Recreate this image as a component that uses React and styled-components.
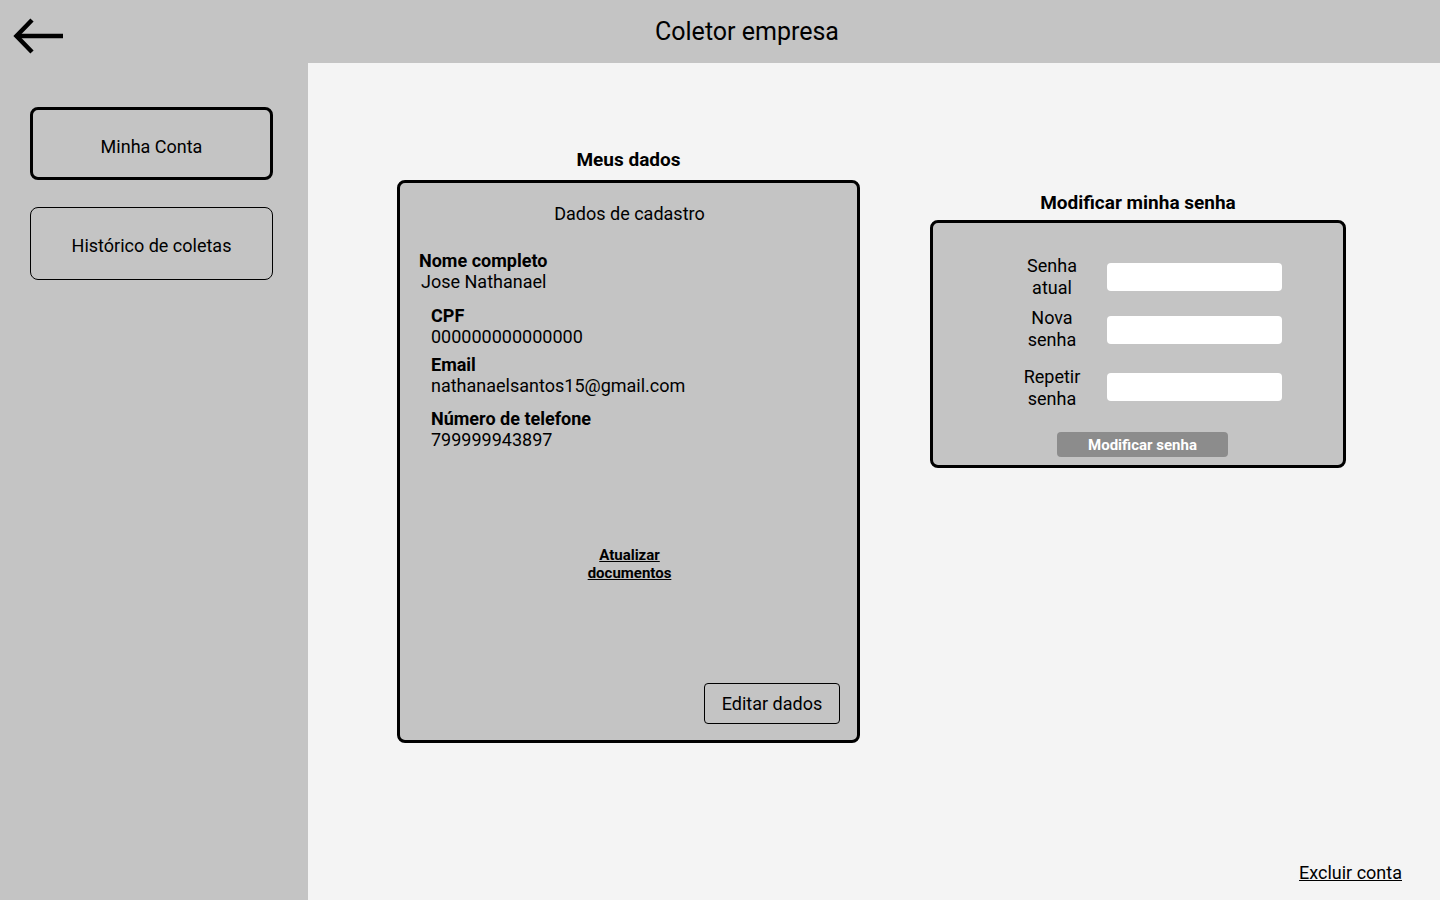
import React from 'react';
import styled, { createGlobalStyle } from 'styled-components';

const GlobalStyle = createGlobalStyle`
  * { box-sizing: border-box; }
  body {
    margin: 0;
    font-family: Roboto, "Liberation Sans", sans-serif;
    color: #000;
  }
`;

const Page = styled.div`
  min-height: 100vh;
  display: grid;
  grid-template-columns: 308px 1fr;
  grid-template-rows: 63px 1fr;
  background-color: #c4c4c4;
`;

const Header = styled.header`
  grid-column: 1 / 3;
  display: flex;
  align-items: center;
  background-color: #c4c4c4;
`;

const BackButton = styled.button`
  flex: none;
  width: 66px;
  height: 63px;
  padding: 16px 0 0 12px;
  border: none;
  background: none;
  display: flex;
  align-items: flex-start;
  cursor: pointer;

  svg {
    flex: none;
  }
`;

const Title = styled.h1`
  flex: 1;
  margin: 0;
  text-align: center;
  font-size: 25px;
  font-weight: 400;
  line-height: 29px;
  padding: 0 12px 1px 0;
`;

const Sidebar = styled.nav`
  display: flex;
  flex-direction: column;
  gap: 27px;
  padding: 44px 35px 0 30px;
`;

const NavButton = styled.button`
  height: 73px;
  width: 243px;
  background: transparent;
  border: ${(p) => (p.$active ? '3px' : '1px')} solid #000;
  border-radius: 8px;
  font-family: Roboto, "Liberation Sans", sans-serif;
  font-size: 18px;
  color: #000;
  padding-top: ${(p) => (p.$active ? '7px' : '5px')};
  cursor: pointer;
`;

const Main = styled.main`
  background-color: #f4f4f4;
  display: flex;
  flex-direction: column;
  padding: 86px 38px 17px 89px;
`;

const Columns = styled.div`
  display: flex;
  align-items: flex-start;
  gap: 70px;
`;

const Column = styled.section`
  display: flex;
  flex-direction: column;
  align-items: center;
  width: ${(p) => p.$width}px;
  margin-top: ${(p) => p.$offset || 0}px;
`;

const SectionTitle = styled.h2`
  margin: 0 0 ${(p) => p.$gap || 10}px;
  font-size: 19px;
  font-weight: 700;
  line-height: 21px;
`;

const Card = styled.div`
  width: 100%;
  background-color: #c4c4c4;
  border: 3px solid #000;
  border-radius: 8px;
`;

const DataCard = styled(Card)`
  height: 563px;
  display: flex;
  flex-direction: column;
  padding: 20px 17px 16px 19px;
`;

const CardHeading = styled.div`
  text-align: center;
  font-size: 18px;
  line-height: 21px;
  margin-bottom: 26px;
`;

const Field = styled.div`
  display: flex;
  flex-direction: column;
  margin-left: ${(p) => p.$indent || 0}px;
  margin-bottom: ${(p) => p.$gap || 0}px;
  font-size: 18px;
  line-height: 21px;
`;

const FieldLabel = styled.span`
  font-weight: 700;
`;

const FieldValue = styled.span`
  padding-left: ${(p) => p.$shift || 0}px;
`;

const DocLink = styled.a`
  align-self: center;
  margin-top: 96px;
  text-align: center;
  font-size: 15px;
  font-weight: 700;
  line-height: 18px;
  color: #000;
  text-decoration: underline;
`;

const EditButton = styled.button`
  align-self: flex-end;
  margin-top: auto;
  width: 136px;
  height: 41px;
  background: transparent;
  border: 1px solid #000;
  border-radius: 4px;
  font-family: Roboto, "Liberation Sans", sans-serif;
  font-size: 18px;
  color: #000;
  cursor: pointer;
`;

const PasswordCard = styled(Card)`
  padding: 32px 0 8px 69px;
`;

const PasswordRow = styled.label`
  display: grid;
  grid-template-columns: 100px 175px;
  column-gap: 5px;
  align-items: center;
  margin-bottom: ${(p) => p.$gap}px;
`;

const PasswordLabel = styled.span`
  text-align: center;
  font-size: 18px;
  line-height: 22px;
`;

const PasswordInput = styled.input`
  height: 28px;
  width: 175px;
  border: none;
  border-radius: 4px;
  background: #fff;
  margin-top: ${(p) => p.$shift || 0}px;
`;

const SubmitButton = styled.button`
  display: block;
  width: 171px;
  height: 25px;
  margin: 0 0 0 55px;
  padding: 0;
  border: none;
  border-radius: 4px;
  background-color: #8c8c8c;
  color: #fff;
  font-family: Roboto, "Liberation Sans", sans-serif;
  font-size: 15px;
  font-weight: 700;
  cursor: pointer;
`;

const DeleteLink = styled.a`
  margin-top: auto;
  align-self: flex-end;
  font-size: 18px;
  line-height: 21px;
  color: #000;
  text-decoration: underline;
`;

const BackArrow = () => (
  <svg width="54" height="40" viewBox="0 0 54 40" fill="none">
    <path d="M6 20H51" stroke="#000" strokeWidth="4.5" />
    <path d="M20 4L4.5 20L20 36" stroke="#000" strokeWidth="4.5" strokeLinejoin="miter" />
  </svg>
);

export default function App() {
  return (
    <Page>
      <GlobalStyle />
      <Header>
        <BackButton aria-label="Voltar">
          <BackArrow />
        </BackButton>
        <Title>Coletor empresa</Title>
      </Header>

      <Sidebar>
        <NavButton $active>Minha Conta</NavButton>
        <NavButton>Histórico de coletas</NavButton>
      </Sidebar>

      <Main>
        <Columns>
          <Column $width={463}>
            <SectionTitle>Meus dados</SectionTitle>
            <DataCard>
              <CardHeading>Dados de cadastro</CardHeading>
              <Field $gap={13}>
                <FieldLabel>Nome completo</FieldLabel>
                <FieldValue $shift={2}>Jose Nathanael</FieldValue>
              </Field>
              <Field $indent={12} $gap={7}>
                <FieldLabel>CPF</FieldLabel>
                <FieldValue>000000000000000</FieldValue>
              </Field>
              <Field $indent={12} $gap={12}>
                <FieldLabel>Email</FieldLabel>
                <FieldValue>nathanaelsantos15@gmail.com</FieldValue>
              </Field>
              <Field $indent={12}>
                <FieldLabel>Número de telefone</FieldLabel>
                <FieldValue>799999943897</FieldValue>
              </Field>
              <DocLink href="#">
                Atualizar
                <br />
                documentos
              </DocLink>
              <EditButton>Editar dados</EditButton>
            </DataCard>
          </Column>

          <Column $width={416} $offset={43}>
            <SectionTitle $gap={7}>Modificar minha senha</SectionTitle>
            <PasswordCard>
              <PasswordRow $gap={8}>
                <PasswordLabel>Senha<br />atual</PasswordLabel>
                <PasswordInput type="password" />
              </PasswordRow>
              <PasswordRow $gap={15}>
                <PasswordLabel>Nova<br />senha</PasswordLabel>
                <PasswordInput type="password" $shift={2} />
              </PasswordRow>
              <PasswordRow $gap={22}>
                <PasswordLabel>Repetir<br />senha</PasswordLabel>
                <PasswordInput type="password" $shift={-2} />
              </PasswordRow>
              <SubmitButton>Modificar senha</SubmitButton>
            </PasswordCard>
          </Column>
        </Columns>
        <DeleteLink href="#">Excluir conta</DeleteLink>
      </Main>
    </Page>
  );
}
